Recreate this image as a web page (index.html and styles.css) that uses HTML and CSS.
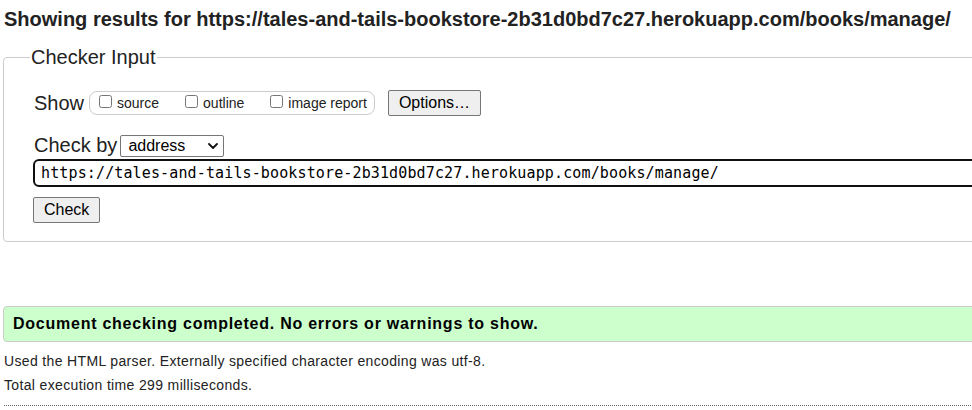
FILE: index.html
```html
<!DOCTYPE html>
<html lang="en">
<head>
<meta charset="utf-8">
<title>Showing results for https://tales-and-tails-bookstore-2b31d0bd7c27.herokuapp.com/books/manage/ - Nu Html Checker</title>
<link rel="stylesheet" href="styles.css">
</head>
<body>
<div class="page">
  <h2 class="title">Showing results for https://tales-and-tails-bookstore-2b31d0bd7c27.herokuapp.com/books/manage/</h2>
  <form class="checker">
    <fieldset class="panel">
      <legend class="panel-legend">Checker Input</legend>
      <div class="row row-show">
        <span class="row-label">Show</span>
        <span class="show-group">
          <label class="opt"><input type="checkbox" class="opt-box"><span>source</span></label>
          <label class="opt"><input type="checkbox" class="opt-box"><span>outline</span></label>
          <label class="opt opt-last"><input type="checkbox" class="opt-box"><span>image report</span></label>
        </span>
        <button type="button" class="btn btn-options">Options…</button>
      </div>
      <div class="row row-by">
        <span class="row-label">Check by</span>
        <span class="select-wrap">
          <select class="by-select">
            <option>address</option>
          </select>
          <svg class="select-chevron" width="10" height="6" viewBox="0 0 10 6" aria-hidden="true"><path d="M1 1 L5 5 L9 1" fill="none" stroke="#111" stroke-width="1.8" stroke-linecap="round" stroke-linejoin="round"/></svg>
        </span>
      </div>
      <input class="url-input" type="url" value="https://tales-and-tails-bookstore-2b31d0bd7c27.herokuapp.com/books/manage/">
      <div class="row row-submit">
        <button type="button" class="btn btn-check">Check</button>
      </div>
    </fieldset>
  </form>
  <p class="success">Document checking completed. No errors or warnings to show.</p>
  <p class="details">Used the HTML parser. Externally specified character encoding was utf-8.</p>
  <p class="details">Total execution time 299 milliseconds.</p>
  <hr class="rule">
</div>
</body>
</html>
```

FILE: styles.css
```css
html {
  overflow: hidden;
  background: #fff;
}
body {
  margin: 0;
  color: #222;
  font-family: "Liberation Sans", Arial, sans-serif;
}
.page {
  width: 1200px;
  padding: 0 0 0 3px;
}
.title {
  margin: 8px 0 0 1px;
  font-size: 20px;
  line-height: 23px;
  font-weight: bold;
  color: #222;
}
.checker {
  margin: 15px 0 0 0;
}
.panel {
  margin: 0;
  padding: 21px 0 18px 30px;
  border: 1px solid #ccc;
  border-radius: 4px;
  min-width: 0;
}
.panel-legend {
  margin-left: -4px;
  padding: 0 1px;
  font-size: 20px;
  line-height: 23px;
  color: #222;
}
.row {
  display: flex;
  align-items: center;
}
.row-label {
  font-size: 20px;
  line-height: 23px;
}
.row-show {
  height: 26px;
}
.show-group {
  display: flex;
  align-items: center;
  margin-left: 5px;
  height: 22px;
  padding: 0 7px 0 9px;
  border: 1px solid #ccc;
  border-radius: 8px;
  font-size: 14px;
}
.opt {
  display: flex;
  align-items: center;
  margin-right: 26px;
  line-height: 16px;
}
.opt-last {
  margin-right: 0;
}
.opt-box {
  width: 13px;
  height: 13px;
  margin: 0 5px 4px 0;
}
.btn {
  height: 26px;
  padding: 0 10px;
  border: 1px solid #767676;
  border-radius: 2px;
  background: #efefef;
  color: #000;
  font-family: "Liberation Sans", Arial, sans-serif;
  font-size: 16px;
  line-height: 18px;
}
.btn-options {
  margin-left: 13px;
}
.row-by {
  margin-top: 18px;
  height: 23px;
}
.select-wrap {
  position: relative;
  display: flex;
  margin-left: 3px;
}
.by-select {
  -webkit-appearance: none;
  appearance: none;
  width: 104px;
  height: 22px;
  padding: 0 0 0 7px;
  border: 1px solid #767676;
  border-radius: 2px;
  background: #fff;
  color: #000;
  font-family: "Liberation Sans", Arial, sans-serif;
  font-size: 16px;
  line-height: 20px;
}
.select-chevron {
  position: absolute;
  left: 88px;
  top: 8px;
  pointer-events: none;
}
.url-input {
  display: block;
  box-sizing: border-box;
  margin: 2px 0 0 -1px;
  width: 1100px;
  height: 28px;
  padding: 0 6px;
  border: 2px solid #101010;
  border-radius: 6px;
  outline: none;
  background: #fff;
  color: #000;
  font-family: "DejaVu Sans Mono", "Liberation Mono", monospace;
  font-size: 15px;
  letter-spacing: 0.13px;
}
.row-submit {
  margin-top: 10px;
  margin-left: -1px;
}
.success {
  margin: 64px 0 11px 0;
  padding: 8px 9px;
  border: 1px solid #ccc;
  border-radius: 4px;
  background: #ccffcc;
  color: #000;
  font-size: 16px;
  line-height: 18px;
  font-weight: bold;
  letter-spacing: 0.75px;
}
.details {
  margin: 8px 0 0 1px;
  font-size: 14px;
  line-height: 16px;
  letter-spacing: 0.35px;
}
.rule {
  margin: 12px 0 0 1px;
  border: 0;
  border-top: 1px dotted #666;
  height: 0;
}
```
